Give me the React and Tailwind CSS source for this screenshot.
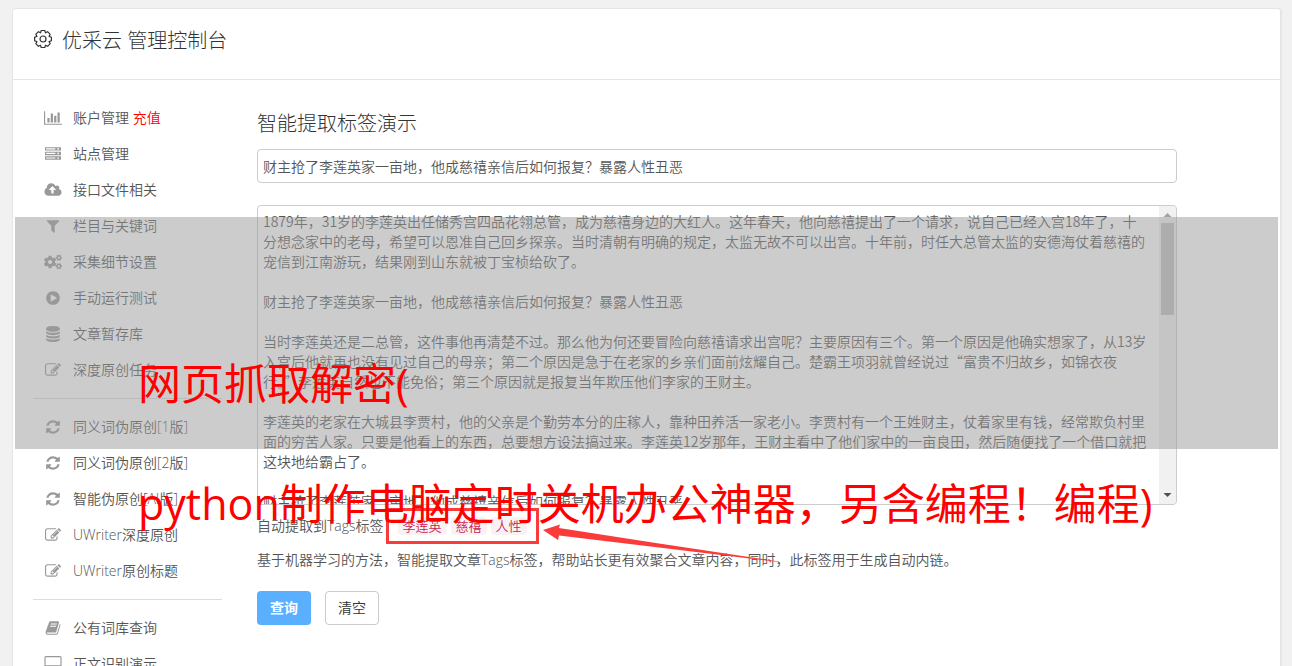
import { useState } from "react";
import { FaCogs } from "react-icons/fa";

const fonts = "font-['Open_Sans','Noto_Sans_CJK_SC',sans-serif]";
const cjkFonts = "font-['Noto_Sans_CJK_SC',sans-serif]";

const icons = {
  chart: {
    box: "0 0 2048 1792",
    d: "M640 896v512h-256v-512h256zm384-512v1024h-256v-1024h256zm1024 1152v128h-2048v-1536h128v1408h1920zm-640-896v768h-256v-768h256zm384-384v1152h-256v-1152h256z",
  },
  server: {
    box: "0 0 1792 1792",
    d: "M128 1408h1024v-128h-1024v128zm0-512h1024v-128h-1024v128zm1440 448q0-40-28-68t-68-28-68 28-28 68 28 68 68 28 68-28 28-68zm-1440-960h1024v-128h-1024v128zm1440 448q0-40-28-68t-68-28-68 28-28 68 28 68 68 28 68-28 28-68zm0-512q0-40-28-68t-68-28-68 28-28 68 28 68 68 28 68-28 28-68zm224 832v384h-1792v-384h1792zm0-512v384h-1792v-384h1792zm0-512v384h-1792v-384h1792z",
  },
  upload: {
    box: "0 0 1920 1792",
    d: "M1280 864q0-14-9-23l-352-352q-9-9-23-9t-23 9l-351 351q-10 12-10 24 0 14 9 23t23 9h224v352q0 13 9.5 22.5t22.5 9.5h192q13 0 22.5-9.5t9.5-22.5v-352h224q13 0 22.5-9.5t9.5-22.5zm640 288q0 159-112.5 271.5t-271.5 112.5h-1088q-185 0-316.5-131.5t-131.5-316.5q0-130 70-240t188-165q-2-30-2-43 0-212 150-362t362-150q156 0 285.5 87t188.5 231q71-62 166-62 106 0 181 75t75 181q0 76-41 138 130 31 213.5 135.5t83.5 238.5z",
  },
  filter: {
    box: "0 0 1792 1792",
    d: "M1595 295q17 41-14 70l-493 493v742q0 42-39 59-13 5-25 5-27 0-45-19l-256-256q-19-19-19-45v-486l-493-493q-31-29-14-70 17-39 59-39h1280q42 0 59 39z",
  },
  play: {
    box: "0 0 1792 1792",
    d: "M896 128q209 0 385.5 103t279.5 279.5 103 385.5-103 385.5-279.5 279.5-385.5 103-385.5-103-279.5-279.5-103-385.5 103-385.5 279.5-279.5 385.5-103zm384 823q32-18 32-55t-32-55l-544-320q-31-19-64-1-32 19-32 56v640q0 37 32 56 16 8 32 8 17 0 32-9z",
  },
  database: {
    box: "0 0 1792 1792",
    d: "M896 768q237 0 443-43t325-127v170q0 69-103 128t-280 93.5-385 34.5-385-34.5-280-93.5-103-128v-170q119 84 325 127t443 43zm0 768q237 0 443-43t325-127v170q0 69-103 128t-280 93.5-385 34.5-385-34.5-280-93.5-103-128v-170q119 84 325 127t443 43zm0-384q237 0 443-43t325-127v170q0 69-103 128t-280 93.5-385 34.5-385-34.5-280-93.5-103-128v-170q119 84 325 127t443 43zm0-1152q208 0 385 34.5t280 93.5 103 128v128q0 69-103 128t-280 93.5-385 34.5-385-34.5-280-93.5-103-128v-128q0-69 103-128t280-93.5 385-34.5z",
  },
  edit: {
    box: "0 0 1792 1792",
    d: "M888 1184l116-116-152-152-116 116v56h96v96h56zm440-720q-16-16-33 1l-350 350q-17 17-1 33t33-1l350-350q17-17 1-33zm80 594v190q0 119-84.5 203.5t-203.5 84.5h-832q-119 0-203.5-84.5t-84.5-203.5v-832q0-119 84.5-203.5t203.5-84.5h832q63 0 117 25 15 7 18 23 3 17-9 29l-49 49q-14 14-32 8-23-6-45-6h-832q-66 0-113 47t-47 113v832q0 66 47 113t113 47h832q66 0 113-47t47-113v-126q0-13 9-22l64-64q15-15 35-7t20 29zm-96-738l288 288-672 672h-288v-288zm444 132l-92 92-288-288 92-92q28-28 68-28t68 28l152 152q28 28 28 68t-28 68z",
  },
  refresh: {
    box: "0 0 1792 1792",
    d: "M1639 1056q0 5-1 7-64 268-268 434.5t-478 166.5q-146 0-282.5-55t-243.5-157l-129 129q-19 19-45 19t-45-19-19-45v-448q0-26 19-45t45-19h448q26 0 45 19t19 45-19 45l-137 137q71 66 161 102t187 36q134 0 250-65t186-179q11-17 53-117 8-23 30-23h192q13 0 22.5 9.5t9.5 22.5zm25-800v448q0 26-19 45t-45 19h-448q-26 0-45-19t-19-45 19-45l138-138q-148-137-349-137-134 0-250 65t-186 179q-11 17-53 117-8 23-30 23h-199q-13 0-22.5-9.5t-9.5-22.5v-7q65-268 270-434.5t480-166.5q146 0 284 55.5t245 156.5l130-129q19-19 45-19t45 19 19 45z",
  },
  book: {
    box: "0 0 1792 1792",
    d: "M1703 478q40 57 18 129l-275 906q-19 64-76.5 107.5t-122.5 43.5h-923q-77 0-148.5-53.5t-99.5-131.5q-24-67-2-127 0-4 3-27t4-37q1-8-3-21.5t-3-19.5q2-11 8-21t16.5-23.5 16.5-23.5q23-38 45-91.5t30-91.5q3-10 .5-30t-.5-28q3-11 17-28t17-23q21-36 42-92t25-90q1-9-2.5-32t.5-28q4-13 22-30.5t22-22.5q19-26 42.5-84.5t27.5-96.5q1-8-3-25.5t-2-26.5q2-8 9-18t18-23 17-21q8-12 16.5-30.5t15-35 16-36 19.5-32 26.5-23.5 36-11.5 47.5 5.5l-1 3q38-9 51-9h761q74 0 114 56t18 130l-274 906q-36 119-71.5 153.5t-128.5 34.5h-869q-27 0-38 15-11 16-1 43 24 70 144 70h923q29 0 56-15.5t35-41.5l300-987q7-22 5-57 38 15 59 43zm-1064 2q-4 13 2 22.5t20 9.5h608q13 0 25.5-9.5t16.5-22.5l21-64q4-13-2-22.5t-20-9.5h-608q-13 0-25.5 9.5t-16.5 22.5zm-83 256q-4 13 2 22.5t20 9.5h608q13 0 25.5-9.5t16.5-22.5l21-64q4-13-2-22.5t-20-9.5h-608q-13 0-25.5 9.5t-16.5 22.5z",
  },
  desktop: {
    box: "0 0 1920 1792",
    d: "M1792 992v-832q0-13-9.5-22.5t-22.5-9.5h-1600q-13 0-22.5 9.5t-9.5 22.5v832q0 13 9.5 22.5t22.5 9.5h1600q13 0 22.5-9.5t9.5-22.5zm128-832v1088q0 66-47 113t-113 47h-544q0 37 16 77.5t32 71 16 43.5q0 26-19 45t-45 19h-512q-26 0-45-19t-19-45q0-14 16-44t32-70 16-78h-544q-66 0-113-47t-47-113v-1088q0-66 47-113t113-47h1600q66 0 113 47t47 113z",
  },
};

const menuGroups = [
  [
    { icon: "chart", label: "账户管理", extra: "充值" },
    { icon: "server", label: "站点管理" },
    { icon: "upload", label: "接口文件相关" },
    { icon: "filter", label: "栏目与关键词" },
    { icon: "cogs", label: "采集细节设置" },
    { icon: "play", label: "手动运行测试" },
    { icon: "database", label: "文章暂存库" },
    { icon: "edit", label: "深度原创任务" },
  ],
  [
    { icon: "refresh", label: "同义词伪原创[1版]" },
    { icon: "refresh", label: "同义词伪原创[2版]" },
    { icon: "refresh", label: "智能伪原创[AI版]" },
    { icon: "edit", label: "UWriter深度原创" },
    { icon: "edit", label: "UWriter原创标题" },
  ],
  [
    { icon: "book", label: "公有词库查询" },
    { icon: "desktop", label: "正文识别演示" },
  ],
];

const defaultTitle = "财主抢了李莲英家一亩地，他成慈禧亲信后如何报复？暴露人性丑恶";

const defaultContent = `1879年，31岁的李莲英出任储秀宫四品花翎总管，成为慈禧身边的大红人。这年春天，他向慈禧提出了一个请求，说自己已经入宫18年了，十分想念家中的老母，希望可以恩准自己回乡探亲。当时清朝有明确的规定，太监无故不可以出宫。十年前，时任大总管太监的安德海仗着慈禧的宠信到江南游玩，结果刚到山东就被丁宝桢给砍了。

财主抢了李莲英家一亩地，他成慈禧亲信后如何报复？暴露人性丑恶

当时李莲英还是二总管，这件事他再清楚不过。那么他为何还要冒险向慈禧请求出宫呢？主要原因有三个。第一个原因是他确实想家了，从13岁入宫后他就再也没有见过自己的母亲；第二个原因是急于在老家的乡亲们面前炫耀自己。楚霸王项羽就曾经说过“富贵不归故乡，如锦衣夜行。”李莲英自然也不能免俗；第三个原因就是报复当年欺压他们李家的王财主。

李莲英的老家在大城县李贾村，他的父亲是个勤劳本分的庄稼人，靠种田养活一家老小。李贾村有一个王姓财主，仗着家里有钱，经常欺负村里面的穷苦人家。只要是他看上的东西，总要想方设法搞过来。李莲英12岁那年，王财主看中了他们家中的一亩良田，然后随便找了一个借口就把这块地给霸占了。

财主抢了李莲英家一亩地，他成慈禧亲信后如何报复？暴露人性丑恶`;

const tags = ["李莲英", "慈禧", "人性"];

const MenuIcon = ({ name }) => {
  if (name === "cogs") return <FaCogs className="h-4 w-[18px]" />;
  const { box, d } = icons[name];
  return (
    <svg viewBox={box} className="h-4 w-[18px] fill-current" aria-hidden="true">
      <path d={d} />
    </svg>
  );
};

const GearIcon = () => (
  <svg viewBox="0 0 20 20" className="size-5" fill="none" stroke="currentColor" strokeWidth="1.2" aria-hidden="true">
    <circle cx="10" cy="10" r="3" />
    <path
      strokeLinejoin="round"
      d="M7.5 3.8 8.200 1.500h3.600l.7 2.300 2.100-1.100 2.600 2.600-1.100 2.100 2.300.8v3.600l-2.300.8 1.100 2.100-2.600 2.600-2.100-1.100-.7 2.300H8.200l-.7-2.300-2.100 1.100-2.600-2.600 1.100-2.100-2.300-.8V8.200l2.300-.8-1.100-2.100 2.600-2.600z"
    />
  </svg>
);

const Sidebar = () => (
  <nav className="w-[189px] shrink-0">
    {menuGroups.map((group, i) => (
      <ul key={i} className={i > 0 ? "mt-2.5 border-t border-[#ddd] pt-2.5" : ""}>
        {group.map((item) => (
          <li key={item.label}>
            <a href="#" className="flex h-9 items-center text-sm text-[#555]">
              <span className="flex w-10 justify-center text-[#999]">
                <MenuIcon name={item.icon} />
              </span>
              <span>
                {item.label}
                {item.extra && <span className="text-[#f00]"> {item.extra}</span>}
              </span>
            </a>
          </li>
        ))}
      </ul>
    ))}
  </nav>
);

const ScrollTrack = () => (
  <div className="absolute inset-y-px right-px flex w-[17px] flex-col items-center rounded-r bg-[#f1f1f1]" aria-hidden="true">
    <svg viewBox="0 0 17 17" className="size-[17px] shrink-0 fill-[#a3a3a3]">
      <path d="M4.500 11h8l-4-4z" />
    </svg>
    <div className="h-[92px] w-[13px] bg-[#c1c1c1]" />
    <svg viewBox="0 0 17 17" className="mt-auto size-[17px] shrink-0 fill-[#505050]">
      <path d="M4.500 6h8l-4 4z" />
    </svg>
  </div>
);

const TagList = () => (
  <span className="relative flex gap-1">
    {tags.map((tag) => (
      <code key={tag} className={`${cjkFonts} rounded bg-[#f9f2f4] px-[5px] text-[13px] leading-[18px] text-[#c7254e]`}>
        {tag}
      </code>
    ))}
    <span className="absolute -inset-x-3 -inset-y-[9px] border-3 border-[#fb3b3a]" />
    <svg viewBox="0 0 244 44" className="absolute top-1.5 left-full ml-4 h-11 w-[244px] max-w-none fill-[#fb3b3a]" aria-hidden="true">
      <path d="M0 7 17 1.500 16 5 116 20.500 236 38.500 236 39 116 24.500 16 12.500 15 17z" />
    </svg>
  </span>
);

const App = () => {
  const [title, setTitle] = useState(defaultTitle);
  const [content, setContent] = useState(defaultContent);

  const handleClear = () => {
    setTitle("");
    setContent("");
  };

  return (
    <div className={`${fonts} relative h-screen overflow-hidden bg-[#f1f1f1] pt-2 pr-2.5 pl-3 font-[350] text-[#555]`}>
      <div className="min-h-screen rounded border border-r-2 border-[#e5e5e5] bg-white">
        <header className="flex h-[71px] items-start gap-[9px] border-b border-[#e5e5e5] px-5 pt-[17px] text-[#333]">
          <span className="flex h-[26px] items-center">
            <GearIcon />
          </span>
          <h1 className="text-xl leading-[30px] font-light">优采云 管理控制台</h1>
        </header>

        <div className="flex gap-[35px] px-5 pt-5">
          <Sidebar />

          <main className="mr-[83px] min-w-0 flex-1">
            <h2 className="mt-[9px] mb-2.5 text-xl leading-[30px] font-light text-[#333]">智能提取标签演示</h2>
            <input
              type="text"
              aria-label="标题"
              value={title}
              onChange={(e) => setTitle(e.target.value)}
              className={`${cjkFonts} block h-[34px] w-full rounded border border-[#ccc] px-[5px] text-sm`}
            />
            <div className="relative mt-[22px]">
              <textarea
                aria-label="正文"
                value={content}
                onChange={(e) => setContent(e.target.value)}
                className={`${cjkFonts} block h-[300px] w-full resize-none rounded border border-[#ccc] pt-[5px] pr-[26px] pb-1.5 pl-[5px] text-sm leading-5 [scrollbar-width:none]`}
              />
              <ScrollTrack />
            </div>
            <div className="mt-[9px] flex h-6 items-center text-sm">
              <span>自动提取到Tags标签：</span>
              <TagList />
            </div>
            <p className="mt-2.5 text-sm leading-6">
              基于机器学习的方法，智能提取文章Tags标签，帮助站长更有效聚合文章内容，同时，此标签用于生成自动内链。
            </p>
            <div className="mt-[19px] flex gap-3.5 text-sm">
              <button type="button" className="h-[34px] w-[54px] rounded bg-[#5aafff] font-bold text-white">
                查询
              </button>
              <button type="button" onClick={handleClear} className="h-[34px] w-[54px] rounded border border-[#ccc] bg-white text-[#333]">
                清空
              </button>
            </div>
          </main>
        </div>
      </div>

      {/* caption banner over the page */}
      <div className="pointer-events-none absolute top-[217px] right-3.5 left-[15px] h-[232px] bg-[#999]/50 pt-[107px] pl-[123px]">
        <p className="text-[43px] leading-[120px] font-normal whitespace-nowrap text-[#f00]">
          网页抓取解密(
          <br />
          python制作电脑定时关机办公神器，另含编程！编程)
        </p>
      </div>
    </div>
  );
};

export default App;
